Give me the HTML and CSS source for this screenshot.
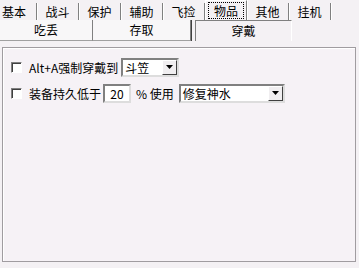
FILE: index.html
```html
<!DOCTYPE html>
<html lang="zh">
<head>
  <meta charset="UTF-8">
  <title>物品 - 穿戴</title>
  <link rel="stylesheet" href="styles.css">
</head>
<body>
  <div class="tabs">
    <div class="tab first">基本</div>
    <div class="tab">战斗</div>
    <div class="tab">保护</div>
    <div class="tab">辅助</div>
    <div class="tab">飞捡</div>
    <div class="tab active"><span class="focus">物品</span></div>
    <div class="tab">其他</div>
    <div class="tab">挂机</div>
  </div>

  <div class="subtabs">
    <div class="subtab">吃丢</div>
    <div class="subtab">存取</div>
    <div class="subtab active">穿戴</div>
  </div>

  <div class="panel">
    <div class="row">
      <span class="check"></span>
      <span class="label">Alt+A强制穿戴到</span>
      <div class="select small">
        <span class="value">斗笠</span>
        <span class="arrow"><svg width="7" height="4" viewBox="0 0 7 4"><path d="M0 0h7L3.5 4z" fill="#000"/></svg></span>
      </div>
    </div>
    <div class="row">
      <span class="check"></span>
      <span class="label">装备持久低于</span>
      <span class="num">20</span>
      <span class="label pct">% 使用</span>
      <div class="select wide">
        <span class="value">修复神水</span>
        <span class="arrow"><svg width="7" height="4" viewBox="0 0 7 4"><path d="M0 0h7L3.5 4z" fill="#000"/></svg></span>
      </div>
    </div>
  </div>
</body>
</html>
```

FILE: styles.css
```css
body {
  margin: 0;
  background-color: #f4f1f4;
  font-family: "Noto Sans CJK SC", "DejaVu Sans", sans-serif;
  font-size: 12px;
  color: #000;
  width: 359px;
  height: 268px;
  overflow: hidden;
}

.tabs {
  display: flex;
  height: 20px;
}

.tab {
  width: 42px;
  height: 17px;
  margin-top: 3px;
  line-height: 17px;
  text-align: center;
  border-right: 1px solid #808080;
  box-shadow: 1px 0 0 #fff;
  box-sizing: border-box;
}

.tab.first {
  width: 37px;
  text-align: left;
  padding-left: 2px;
}

.tab.active {
  height: 20px;
  margin-top: 0;
  padding-top: 2px;
  border: 1px solid #808080;
  border-top-color: #fff;
  border-left-color: #fff;
  border-bottom: none;
  line-height: 15px;
}

.focus {
  display: inline-block;
  padding: 0 5px;
  outline: 1px dotted #000;
  line-height: 15px;
}

.subtabs {
  display: flex;
  height: 21px;
}

.subtab {
  width: 97px;
  line-height: 19px;
  text-align: center;
  border-right: 1px solid #808080;
  border-bottom: 1px solid #a0a0a0;
  box-shadow: 1px 0 0 #404040;
  background-color: #f8f7f8;
}

.subtab:first-child {
  width: 92px;
}

.subtab.active {
  width: 95px;
  margin-left: 4px;
  border: 1px solid #808080;
  border-right-color: #fff;
  border-bottom: none;
  box-shadow: none;
  background-color: #f4f1f4;
}

.panel {
  margin: 6px 2px 0 2px;
  height: 215px;
  width: 354px;
  border: 1px solid #a09ca0;
  box-shadow: inset 1px 1px 0 #fff;
  background-color: #f6f2f6;
  padding-top: 6px;
  box-sizing: border-box;
}

.row {
  display: flex;
  align-items: center;
  height: 26px;
  padding-left: 8px;
}

.check {
  width: 11px;
  height: 11px;
  border: 1px solid #808080;
  border-right-color: #fff;
  border-bottom-color: #fff;
  box-shadow: inset 1px 1px 0 #404040;
  background-color: #fff;
  margin-right: 7px;
  box-sizing: border-box;
}

.label {
  white-space: nowrap;
}

.select {
  display: flex;
  align-items: center;
  height: 19px;
  margin-left: 3px;
  border: 2px solid #808080;
  border-right-color: #ddd;
  border-bottom-color: #ddd;
  background-color: #fff;
  box-sizing: border-box;
}

.select.small {
  width: 58px;
}

.select.wide {
  width: 106px;
  margin-left: 5px;
}

.value {
  flex: 1;
  padding-left: 2px;
  line-height: 15px;
}

.arrow {
  width: 15px;
  height: 15px;
  display: flex;
  align-items: center;
  justify-content: center;
  background-color: #f0eef0;
  border: 1px solid #fff;
  border-right-color: #404040;
  border-bottom-color: #404040;
  box-sizing: border-box;
}

.num {
  width: 28px;
  height: 19px;
  margin-left: 2px;
  line-height: 15px;
  text-align: center;
  border: 2px solid #808080;
  border-right-color: #ddd;
  border-bottom-color: #ddd;
  background-color: #fff;
  box-sizing: border-box;
}

.pct {
  margin-left: 5px;
}
```
